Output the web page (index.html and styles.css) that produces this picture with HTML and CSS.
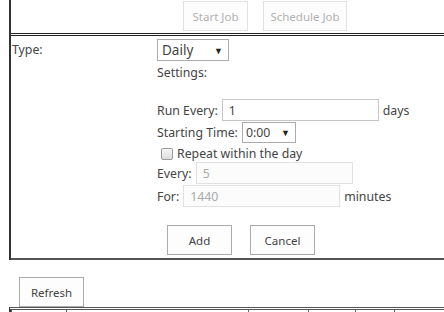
FILE: index.html
```html
<!DOCTYPE html>
<html lang="en">
<head>
    <meta charset="UTF-8" />
    <title>Job Schedule</title>
    <link rel="stylesheet" href="styles.css">
</head>
<body>
    <div class="job-panel">
        <div class="job-actions">
            <button class="btn btn-disabled" disabled>Start Job</button>
            <button class="btn btn-disabled btn-wide" disabled>Schedule Job</button>
        </div>

        <div class="job-form">
            <div class="type-row">
                <span class="type-label">Type:</span>
                <div class="type-fields">
                    <div class="fake-select select-type"><span>Daily</span><span class="arrow">&#9660;</span></div>
                    <div class="settings-title">Settings:</div>

                    <div class="field-row row-run">
                        <span>Run Every:</span>
                        <input class="text-input" type="text" value="1" />
                        <span>days</span>
                    </div>
                    <div class="field-row row-start">
                        <span>Starting Time:</span>
                        <div class="fake-select select-time"><span>0:00</span><span class="arrow">&#9660;</span></div>
                    </div>
                    <div class="field-row row-repeat">
                        <span class="check-box"></span>
                        <span>Repeat within the day</span>
                    </div>
                    <div class="field-row row-every">
                        <span>Every:</span>
                        <input class="text-input" type="text" value="5" disabled />
                    </div>
                    <div class="field-row row-for">
                        <span>For:</span>
                        <input class="text-input" type="text" value="1440" disabled />
                        <span>minutes</span>
                    </div>

                    <div class="form-buttons">
                        <button class="btn">Add</button>
                        <button class="btn">Cancel</button>
                    </div>
                </div>
            </div>
        </div>
    </div>

    <div class="list-area">
        <button class="btn btn-refresh">Refresh</button>
        <table class="job-table">
            <tr>
                <th class="col-1"></th>
                <th class="col-2"></th>
                <th class="col-3"></th>
                <th class="col-4"></th>
                <th class="col-5"></th>
                <th class="col-6"></th>
            </tr>
        </table>
    </div>
</body>
</html>
```

FILE: styles.css
```css
* {
    box-sizing: border-box;
    margin: 0;
    padding: 0;
}

body {
    font-family: "Noto Sans", sans-serif;
    font-size: 12.3px;
    color: #444;
    background: white;
    height: 312px;
    overflow: hidden;
}

.job-panel {
    margin-left: 9px;
    border-left: 2px solid #333;
}

.job-actions {
    display: flex;
    gap: 15px;
    height: 36px;
    padding: 1px 0 0 172px;
    border-bottom: 3px double #222;
}

.btn {
    font-family: "Noto Sans", sans-serif;
    font-size: 11.5px;
    color: #444;
    background: #fdfdfd;
    border: 1px solid #ababab;
    width: 65px;
    height: 30px;
}

.btn-disabled {
    color: #b1b1b1;
    border-color: #e1e1e1;
}

.btn-wide {
    width: 84px;
}

.job-form {
    padding: 3px 0 3px;
    border-bottom: 2px solid #555;
}

.type-row {
    display: grid;
    grid-template-columns: 146px 1fr;
}

.type-label {
    padding-left: 1px;
    line-height: 21px;
}

.fake-select {
    display: flex;
    align-items: center;
    justify-content: space-between;
    border: 1px solid #ababab;
    padding: 0 5px 0 4px;
    background: white;
}

.fake-select .arrow {
    font-size: 9px;
    color: #222;
}

.select-type {
    width: 72px;
    height: 22px;
    font-size: 13.5px;
}

.select-time {
    width: 54px;
    height: 21px;
    padding-left: 3px;
}

.settings-title {
    line-height: 20px;
    margin-top: 2px;
    margin-bottom: 16px;
}

.field-row {
    display: flex;
    align-items: center;
    gap: 4px;
}

.text-input {
    font-family: "Noto Sans", sans-serif;
    font-size: 12.3px;
    color: #444;
    width: 157px;
    height: 22px;
    border: 1px solid #c6c6c6;
    padding: 0 6px;
    background: white;
}

.text-input:disabled {
    color: #aaa;
    border-color: #e1e1e1;
    background: #fcfcfc;
}

.row-run {
    height: 22px;
}

.row-start {
    height: 21px;
    margin-top: 1px;
}

.row-repeat {
    height: 17px;
    margin-top: 2px;
    padding-left: 4px;
}

.check-box {
    width: 12px;
    height: 12px;
    border: 1px solid #9a9a9a;
    border-radius: 2px;
    background: linear-gradient(#f4f4f4, #dedede);
}

.row-every {
    height: 22px;
}

.row-for {
    height: 22px;
    margin-top: 1px;
}

.form-buttons {
    display: flex;
    gap: 18px;
    margin: 18px 0 0 10px;
}

.list-area {
    padding-top: 17px;
}

.btn-refresh {
    margin-left: 19px;
    display: block;
}

.job-table {
    margin-left: 9px;
    width: 435px;
    border-collapse: separate;
    border-spacing: 0;
    border-top: 3px double #555;
    border-left: 2px solid #333;
}

.job-table th {
    height: 2px;
    border-left: 1px solid #666;
}

.col-1 { width: 55px; }
.col-2 { width: 182px; }
.col-3 { width: 60px; }
.col-4 { width: 47px; }
.col-5 { width: 39px; }
```
